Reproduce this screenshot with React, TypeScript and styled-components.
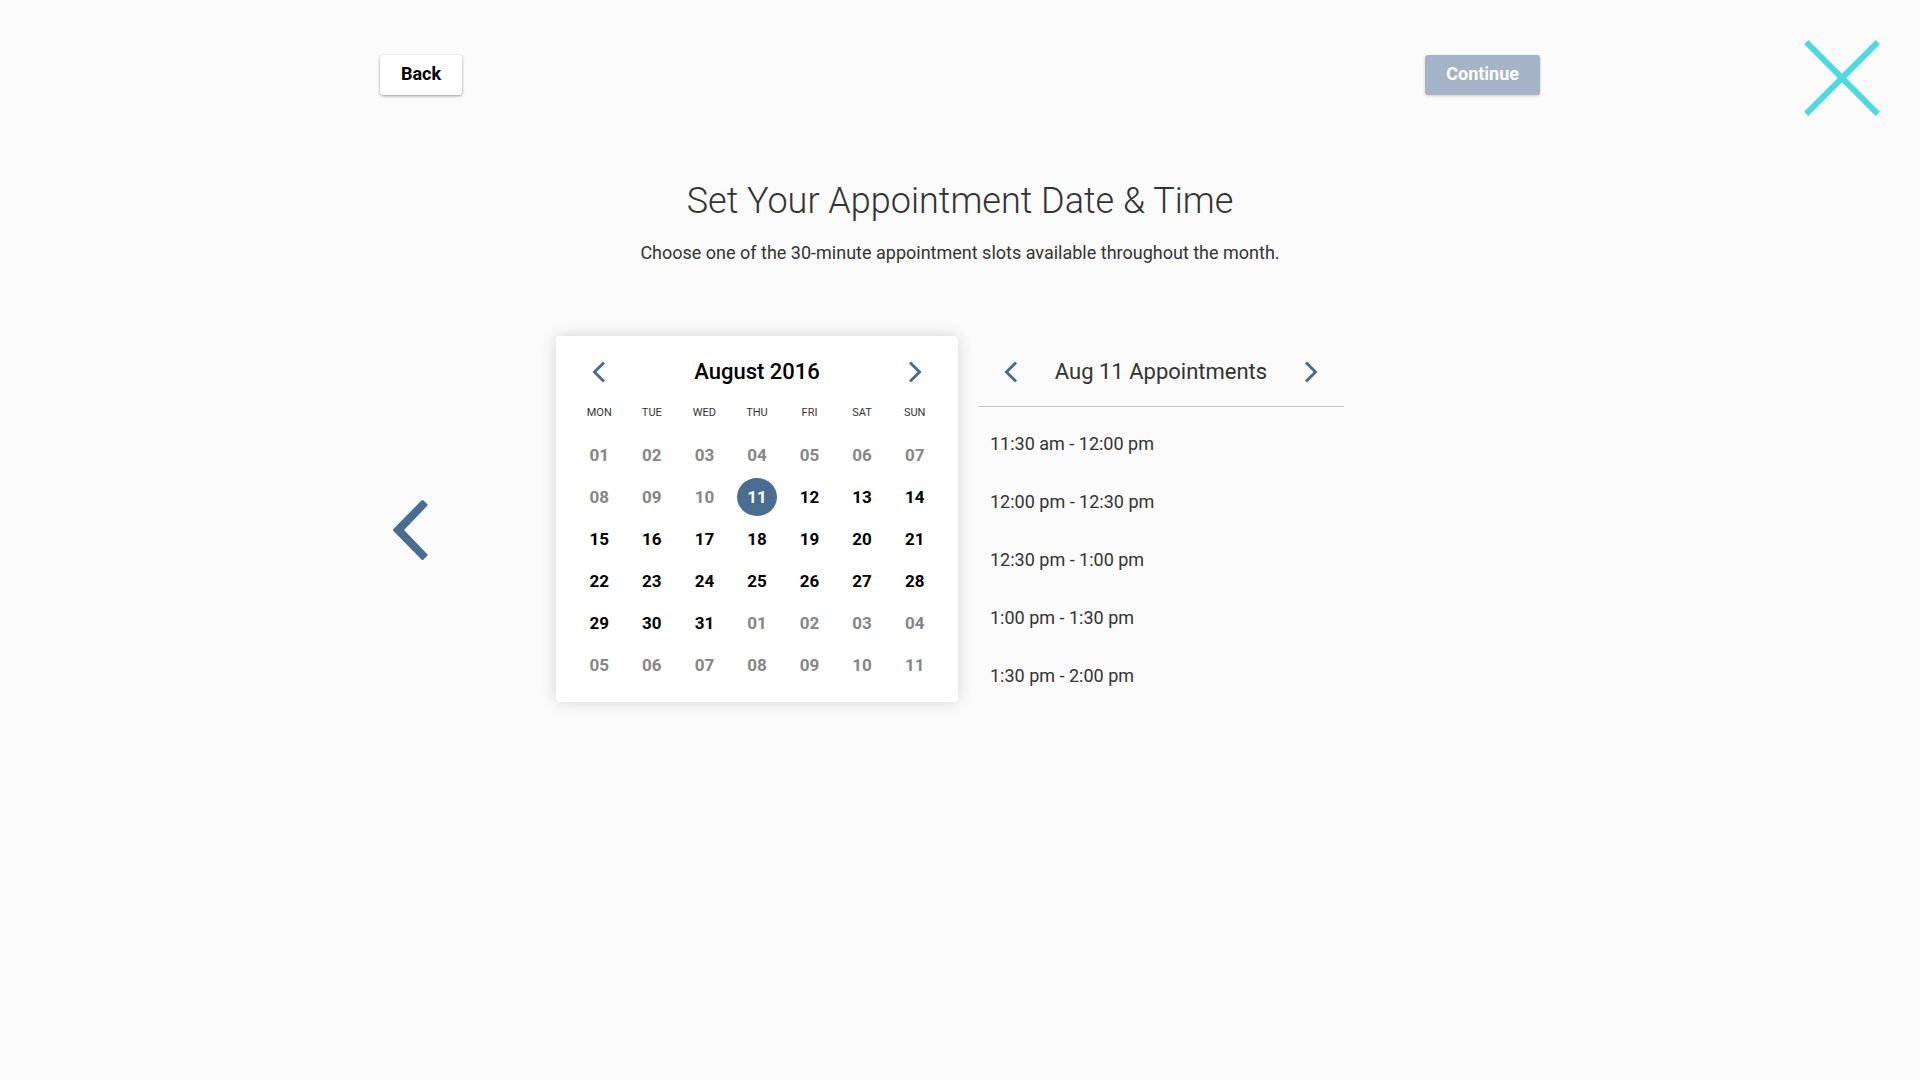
import React, { useState } from "react";
import styled, { createGlobalStyle } from "styled-components";

const colors = {
  page: "#fbfbfb",
  ink: "#333333",
  blue: "#4a6d92",
  disabled: "#a4b4c6",
  muted: "#868686",
  cyan: "#4ed9e1",
};

const GlobalStyle = createGlobalStyle`
  * { box-sizing: border-box; }
  body {
    margin: 0;
    background: ${colors.page};
    color: ${colors.ink};
    font-family: Roboto, "Liberation Sans", sans-serif;
  }
  button { font-family: inherit; cursor: pointer; }
`;

const Page = styled.div`
  min-height: 100vh;
  padding: 40px;
`;

const TopBar = styled.header`
  display: grid;
  grid-template-columns: 1fr minmax(0, 1160px) 1fr;
`;

const Actions = styled.div`
  grid-column: 2;
  display: flex;
  justify-content: space-between;
  align-items: flex-start;
  padding-top: 15px;
`;

const ActionButton = styled.button<{ $filled?: boolean }>`
  height: 40px;
  padding: 0 21px 3px;
  border: 0;
  border-radius: 3px;
  background: ${(p) => (p.$filled ? colors.disabled : "#ffffff")};
  color: ${(p) => (p.$filled ? "#ffffff" : "#000000")};
  font-size: 18px;
  font-weight: 700;
  box-shadow: 0 1px 3px rgba(0, 0, 0, ${(p) => (p.$filled ? 0.2 : 0.4)});
`;

const IconButton = styled.button`
  display: block;
  padding: 0;
  border: 0;
  background: none;
  color: ${colors.blue};
  svg { display: block; }
`;

const CloseButton = styled(IconButton)`
  justify-self: end;
  color: ${colors.cyan};
`;

const Main = styled.main`
  max-width: 1160px;
  margin: 0 auto;
`;

const Intro = styled.div`
  padding: 63px 0 71px;
  text-align: center;
`;

const Title = styled.h1`
  margin: 0;
  font-size: 36px;
  line-height: 44px;
  font-weight: 300;
`;

const Subtitle = styled.p`
  margin: 18px 0 0;
  font-size: 18px;
  line-height: 24px;
  font-weight: 400;
`;

const Stage = styled.div`
  display: grid;
  grid-template-columns: 60px 1fr 60px;
  align-items: center;
`;

const PreviousStep = styled(IconButton)`
  justify-self: center;
`;

const Panels = styled.div`
  display: flex;
  justify-content: center;
  align-items: flex-start;
  gap: 20px;
  padding: 0 20px 20px 0;
`;

const Calendar = styled.section`
  width: 402px;
  padding: 0 17px 16px;
  border-radius: 4px;
  background: #ffffff;
  box-shadow: 0 0 16px rgba(0, 0, 0, 0.16);
`;

const PanelHeader = styled.div<{ $inset: number }>`
  display: flex;
  justify-content: space-between;
  align-items: center;
  height: 70px;
  padding: 2px ${(p) => p.$inset}px 0;
`;

const PanelTitle = styled.h2<{ $strong?: boolean }>`
  margin: 0;
  color: ${(p) => (p.$strong ? "#000000" : colors.ink)};
  font-size: 22px;
  line-height: 26px;
  font-weight: ${(p) => (p.$strong ? 500 : 400)};
`;

const Month = styled.table`
  width: 100%;
  table-layout: fixed;
  border-collapse: collapse;
`;

const Weekday = styled.th`
  padding: 1px 0 15px;
  font-size: 11px;
  line-height: 12px;
  font-weight: 400;
`;

const DayCell = styled.td`
  height: 42px;
  padding: 0;
`;

const Day = styled.button<{ $selected: boolean }>`
  display: block;
  width: 40px;
  height: 38px;
  margin: 0 auto;
  padding: 0;
  border: 0;
  border-radius: 50%;
  background: ${(p) => (p.$selected ? colors.blue : "transparent")};
  color: ${(p) => (p.$selected ? "#ffffff" : "#000000")};
  font-size: 17px;
  font-weight: 700;
  &:disabled {
    color: ${colors.muted};
    cursor: default;
  }
`;

const Appointments = styled.section`
  width: 366px;
`;

const Slots = styled.ul`
  margin: 0;
  padding: 7px 0 0;
  border-top: 1px solid #c2c4c3;
  list-style: none;
`;

const Slot = styled.button`
  display: block;
  width: 100%;
  height: 58px;
  padding: 0 12px;
  border: 0;
  background: none;
  color: ${colors.ink};
  font-size: 18px;
  font-weight: 400;
  text-align: left;
`;

function Chevron({ next = false }: { next?: boolean }) {
  return (
    <svg width="14" height="22" viewBox="0 0 14 22" fill="none" stroke="currentColor" strokeWidth="3" aria-hidden="true">
      <path d={next ? "M2 1.5 11.5 11 2 20.5" : "M12 1.5 2.5 11 12 20.5"} />
    </svg>
  );
}

const weekdays = ["MON", "TUE", "WED", "THU", "FRI", "SAT", "SUN"];
const slots = [
  "11:30 am - 12:00 pm",
  "12:00 pm - 12:30 pm",
  "12:30 pm - 1:00 pm",
  "1:00 pm - 1:30 pm",
  "1:30 pm - 2:00 pm",
];
const FIRST_OPEN_DAY = 11;
const DAYS_IN_MONTH = 31;
const weeks = Array.from({ length: 6 }, (_, w) =>
  Array.from({ length: 7 }, (_, d) => w * 7 + d + 1)
);

export default function App() {
  const [selected, setSelected] = useState(11);

  return (
    <>
      <GlobalStyle />
      <Page>
        <TopBar>
          <Actions>
            <ActionButton type="button">Back</ActionButton>
            <ActionButton type="button" $filled disabled>Continue</ActionButton>
          </Actions>
          <CloseButton type="button" aria-label="Close">
            <svg width="76" height="76" viewBox="0 0 76 76" fill="none" stroke="currentColor" strokeWidth="6" aria-hidden="true">
              <path d="M2.2 2.2 73.8 73.8M73.8 2.2 2.2 73.8" />
            </svg>
          </CloseButton>
        </TopBar>
        <Main>
          <Intro>
            <Title>Set Your Appointment Date &amp; Time</Title>
            <Subtitle>Choose one of the 30-minute appointment slots available throughout the month.</Subtitle>
          </Intro>
          <Stage>
            <PreviousStep type="button" aria-label="Previous step">
              <svg width="36" height="62" viewBox="0 0 36 62" aria-hidden="true">
                <path
                  d="M2.5 31 30.5 2.5 34 6 10 31 34 56 30.5 59.5Z"
                  fill="currentColor"
                  stroke="currentColor"
                  strokeWidth="3"
                  strokeLinejoin="round"
                />
              </svg>
            </PreviousStep>
            <Panels>
              <Calendar>
                <PanelHeader $inset={19}>
                  <IconButton type="button" aria-label="Previous month"><Chevron /></IconButton>
                  <PanelTitle $strong>August 2016</PanelTitle>
                  <IconButton type="button" aria-label="Next month"><Chevron next /></IconButton>
                </PanelHeader>
                <Month>
                  <thead>
                    <tr>{weekdays.map((name) => <Weekday key={name} scope="col">{name}</Weekday>)}</tr>
                  </thead>
                  <tbody>
                    {weeks.map((week) => (
                      <tr key={week[0]}>
                        {week.map((n) => (
                          <DayCell key={n}>
                            <Day
                              type="button"
                              disabled={n < FIRST_OPEN_DAY || n > DAYS_IN_MONTH}
                              $selected={n === selected}
                              aria-pressed={n === selected}
                              onClick={() => setSelected(n)}
                            >
                              {String(n > DAYS_IN_MONTH ? n - DAYS_IN_MONTH : n).padStart(2, "0")}
                            </Day>
                          </DayCell>
                        ))}
                      </tr>
                    ))}
                  </tbody>
                </Month>
              </Calendar>
              <Appointments>
                <PanelHeader $inset={26}>
                  <IconButton type="button" aria-label="Previous day"><Chevron /></IconButton>
                  <PanelTitle>Aug {selected} Appointments</PanelTitle>
                  <IconButton type="button" aria-label="Next day"><Chevron next /></IconButton>
                </PanelHeader>
                <Slots>
                  {slots.map((slot) => (
                    <li key={slot}><Slot type="button">{slot}</Slot></li>
                  ))}
                </Slots>
              </Appointments>
            </Panels>
          </Stage>
        </Main>
      </Page>
    </>
  );
}
